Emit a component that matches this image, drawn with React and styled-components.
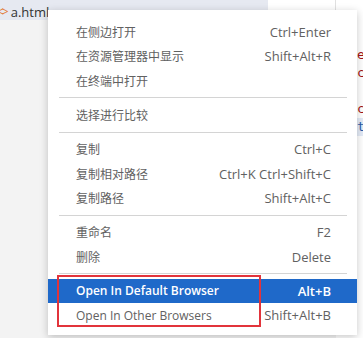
import React from 'react';
import styled, { createGlobalStyle } from 'styled-components';

const GlobalStyle = createGlobalStyle`
  html, body {
    margin: 0;
    padding: 0;
    width: 363px;
    height: 338px;
    overflow: hidden;
    background: #ffffff;
  }
`;

const Workbench = styled.div`
  position: relative;
  width: 363px;
  height: 338px;
  display: flex;
  flex-direction: column;
  font-family: "Open Sans", "Noto Sans CJK SC", sans-serif;
`;

const TabBar = styled.div`
  height: 20px;
  display: flex;
  background: #e6e9f1;
`;

const Tab = styled.div`
  display: flex;
  align-items: center;
  gap: 4px;
  padding-top: 3px;
  width: 268px;
  font-size: 13px;
  color: #333;
  white-space: nowrap;
  overflow: hidden;
`;

const ActiveTab = styled.div`
  width: 67px;
  background: #ffffff;
  border-right: 1px solid #e0e0e0;
`;

const TabFill = styled.div`
  flex: 1;
  background: #ffffff;
`;

const FileIcon = styled.span`
  margin-left: -3px;
  color: #e37933;
  font-size: 12px;
  letter-spacing: -2px;
`;

const Main = styled.div`
  flex: 1;
  display: flex;
`;

const Sidebar = styled.div`
  width: 336px;
  background: #f3f3f3;
`;

const Editor = styled.div`
  flex: 1;
  padding: 26px 0 0 21px;
  font-family: "DejaVu Sans Mono", monospace;
  font-size: 13px;
  line-height: 18px;
  white-space: pre;
  overflow: hidden;
`;

const CodeLine = styled.div`
  height: 18px;
  color: ${p => p.color || '#a31515'};
  background: ${p => (p.selected ? '#e4ebf7' : 'transparent')};
`;

const Menu = styled.div`
  position: absolute;
  left: 48px;
  top: 10px;
  width: 309px;
  padding: 10px 0 8px;
  background: #ffffff;
  box-shadow: 0 2px 8px rgba(0, 0, 0, 0.22);
  font-family: "Open Sans", "Noto Sans CJK SC", sans-serif;
  font-size: 12px;
  color: #616161;
`;

const Item = styled.div`
  height: 24.3px;
  display: flex;
  align-items: center;
  justify-content: space-between;
  padding: 0 26px 0 28px;
  background: ${p => (p.active ? '#1f69c9' : 'transparent')};
  color: ${p => (p.active ? '#ffffff' : '#616161')};
  font-weight: ${p => (p.active ? 600 : 400)};
  white-space: nowrap;
`;

const Keys = styled.span`
  margin-left: 24px;
  font-size: 13px;
`;

const Separator = styled.div`
  height: 10px;
  display: flex;
  align-items: center;
  padding: 0 10px 0 11px;

  &::after {
    content: '';
    flex: 1;
    height: 1px;
    background: #d4d4d4;
  }
`;

const Highlight = styled.div`
  position: absolute;
  left: 9px;
  top: 265px;
  width: 204px;
  height: 52px;
  border: 2px solid #e2343b;
  box-sizing: border-box;
  pointer-events: none;
`;

const groups = [
  [
    ['在侧边打开', 'Ctrl+Enter'],
    ['在资源管理器中显示', 'Shift+Alt+R'],
    ['在终端中打开', ''],
  ],
  [['选择进行比较', '']],
  [
    ['复制', 'Ctrl+C'],
    ['复制相对路径', 'Ctrl+K Ctrl+Shift+C'],
    ['复制路径', 'Shift+Alt+C'],
  ],
  [
    ['重命名', 'F2'],
    ['删除', 'Delete'],
  ],
  [
    ['Open In Default Browser', 'Alt+B', true],
    ['Open In Other Browsers', 'Shift+Alt+B'],
  ],
];

export default function App() {
  return (
    <>
      <GlobalStyle />
      <Workbench>
        <TabBar>
          <Tab>
            <FileIcon>&lt;&gt;</FileIcon>
            <span>a.html</span>
          </Tab>
          <ActiveTab />
          <TabFill />
        </TabBar>
        <Main>
          <Sidebar />
          <Editor>
            <CodeLine>e</CodeLine>
            <CodeLine>c</CodeLine>
            <CodeLine> </CodeLine>
            <CodeLine>c</CodeLine>
            <CodeLine color="#2d5ea8" selected>t</CodeLine>
          </Editor>
        </Main>
        <Menu>
          {groups.map((group, gi) => (
            <React.Fragment key={gi}>
              {gi > 0 && <Separator />}
              {group.map(([label, keys, active]) => (
                <Item key={label} active={active}>
                  <span>{label}</span>
                  {keys && <Keys>{keys}</Keys>}
                </Item>
              ))}
            </React.Fragment>
          ))}
          <Highlight />
        </Menu>
      </Workbench>
    </>
  );
}
